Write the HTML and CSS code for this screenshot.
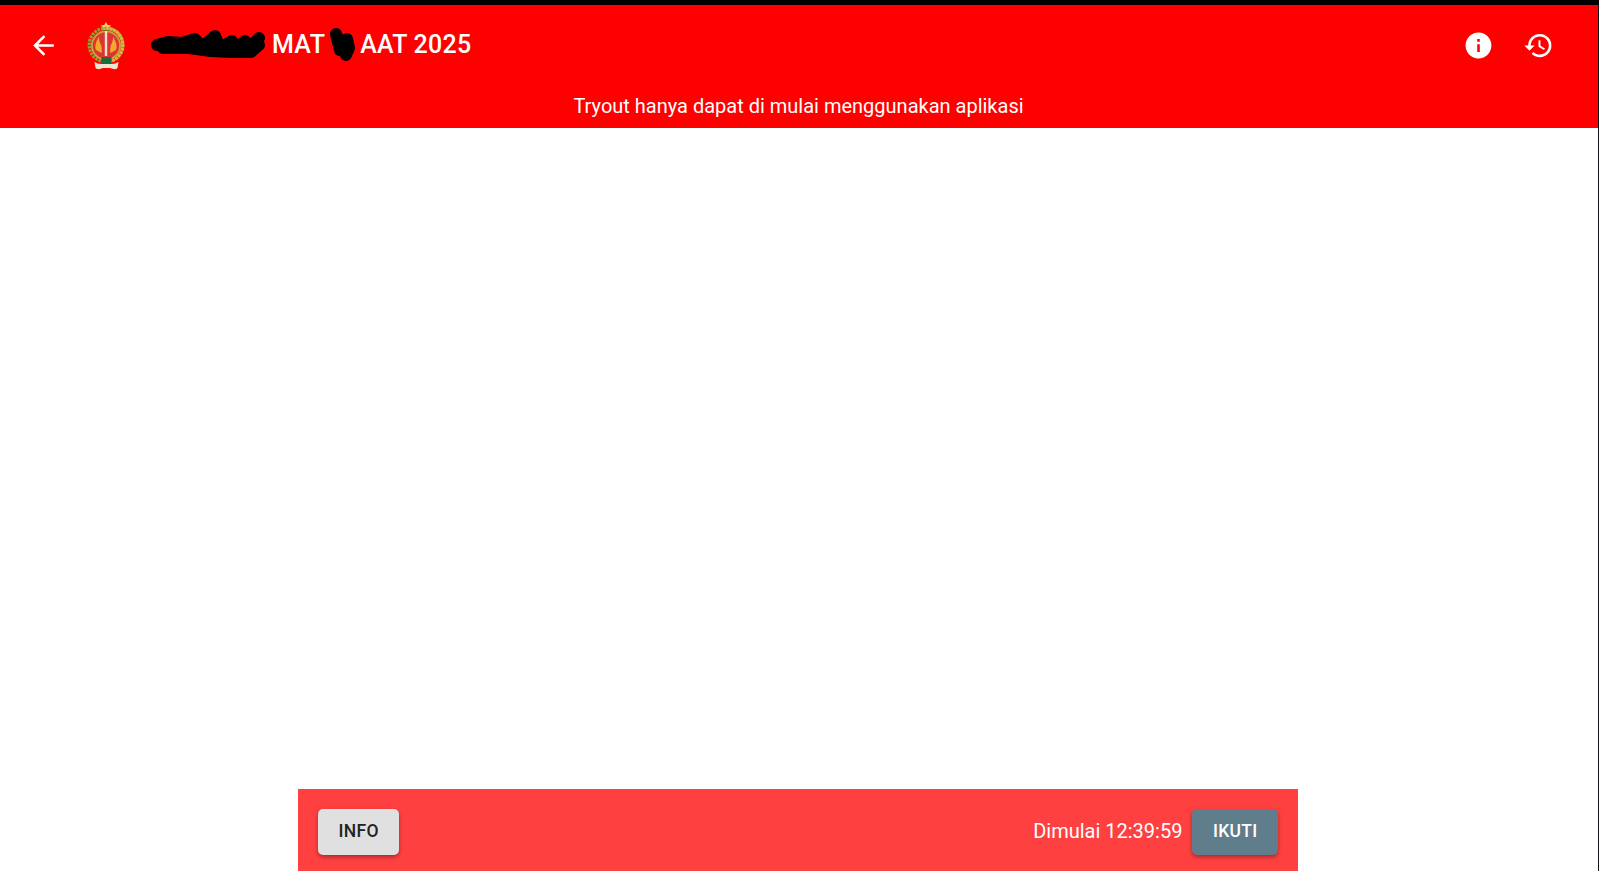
FILE: index.html
```html
<!DOCTYPE html>
<html lang="id">
<head>
  <meta charset="UTF-8">
  <title>Tryout MAT AAT 2025</title>
  <link rel="stylesheet" href="styles.css">
</head>
<body>
  <div class="page">
    <header class="appbar">
      <div class="toolbar">
        <button class="icon-btn back-btn" aria-label="Kembali">
          <svg viewBox="0 0 24 24" width="31" height="31"><path fill="#fff" d="M20 11H7.83l5.59-5.59L12 4l-8 8 8 8 1.41-1.41L7.83 13H20v-2z"/></svg>
        </button>
        <svg class="logo" viewBox="0 0 38 48" width="39" height="48">
          <path fill="#f2d468" d="M18.5 0l1.7 3 3.6.4-2.6 2.4.8 3.5-3.5-1.8-3.5 1.8.8-3.5-2.6-2.4 3.6-.4z"/>
          <rect x="15.5" y="8" width="6" height="3.5" fill="#3a3a2a"/>
          <circle cx="18.5" cy="23" r="16.8" fill="none" stroke="#8fa03a" stroke-width="3.2" stroke-dasharray="2.5 1"/>
          <path fill="none" stroke="#d6b63f" stroke-width="3.2" stroke-dasharray="3 .6" d="M18.5 6.200a16.8 16.8 0 0 1 0 33.6"/>
          <circle cx="18.5" cy="23.5" r="15" fill="#c9a53a"/>
          <circle cx="18.5" cy="23.5" r="13.2" fill="#dc3436"/>
          <path fill="#f2a92b" d="M8.500 28c-1.500-4 0-9 3-13 0 4 1 6 2 8 1 3 1 6 .5 8zM28.500 28c1.500-4 0-9-3-13 0 4-1 6-2 8-1 3-1 6-.5 8z"/>
          <rect x="17.3" y="9" width="2.4" height="25" fill="#eee3c2"/>
          <rect x="14" y="35" width="10" height="8" fill="#1c6b3c"/>
          <path fill="#ece6d2" d="M7 40c2 1 4 2 7 2h10c3 0 5-1 7-2l-1 6c-2 2-5 1-7 0h-8c-2 1-5 2-7 0z"/>
        </svg>
        <h1 class="title">
          <svg class="blob blob-a" viewBox="0 0 114 28" width="114" height="28"><polyline points="6,15 17,12 31,13 44,9 51,17 64,6 69,18 81,11 84,20 94,11 97,20 108,8"/><polyline points="12,18 38,18 60,21 80,22 100,22 108,15"/></svg>
          <span>MAT</span>
          <svg class="blob blob-b" viewBox="0 0 25 33" width="25" height="33"><polyline points="6,6 8,14 10,22"/><polyline points="17,11 19,20 16,27"/><polyline points="8,10 17,17"/></svg>
          <span>AAT 2025</span>
        </h1>
        <div class="actions">
          <button class="icon-btn" aria-label="Info">
            <svg viewBox="0 0 24 24" width="31" height="31"><path fill="#fff" d="M12 2C6.48 2 2 6.48 2 12s4.48 10 10 10 10-4.48 10-10S17.52 2 12 2zm1 15h-2v-6h2v6zm0-8h-2V7h2v2z"/></svg>
          </button>
          <button class="icon-btn" aria-label="Riwayat">
            <svg viewBox="0 0 24 24" width="31" height="31"><path fill="#fff" d="M13 3a9 9 0 0 0-9 9H1l3.89 3.89.07.14L9 12H6c0-3.87 3.13-7 7-7s7 3.13 7 7-3.13 7-7 7c-1.93 0-3.68-.79-4.94-2.06l-1.42 1.42A8.954 8.954 0 0 0 13 21a9 9 0 0 0 0-18zm-1 5v5l4.28 2.54.72-1.21-3.5-2.08V8H12z"/></svg>
          </button>
        </div>
      </div>
      <p class="subtitle">Tryout hanya dapat di mulai menggunakan aplikasi</p>
    </header>

    <main class="content"></main>

    <footer class="bottom-bar">
      <button class="btn btn-info">INFO</button>
      <div class="bottom-right">
        <span class="start-time">Dimulai 12:39:59</span>
        <button class="btn btn-join">IKUTI</button>
      </div>
    </footer>
  </div>
</body>
</html>
```

FILE: styles.css
```css
html, body { height: 100%; }
body { margin: 0; height: 871px; overflow: hidden; background: #12121c; font-family: Roboto, "Liberation Sans", sans-serif; border-top: 5px solid #000; box-sizing: border-box; }
button { font-family: inherit; border: none; cursor: pointer; }

.page { display: flex; flex-direction: column; height: 866px; margin-right: 1px; background: #fff; }

.appbar { background: #f00; color: #fff; height: 123px; flex: none; }
.toolbar { display: flex; align-items: center; height: 80px; padding: 0 40px 0 23px; }
.icon-btn { background: none; padding: 0; width: 40px; height: 40px; display: flex; align-items: center; justify-content: center; }
.logo { margin: 1px 0 0 24px; }
.title { display: flex; align-items: center; margin: 0 0 2px 25px; font-size: 25px; font-weight: 500; letter-spacing: 0.25px; }
.blob { flex: none; fill: none; stroke: #000; stroke-linecap: round; stroke-linejoin: round; }
.blob-a { margin-right: 7px; stroke-width: 12; }
.blob-b { margin: 0 5px 0 5px; stroke-width: 12; }
.actions { display: flex; gap: 20px; margin-left: auto; }
.subtitle { margin: 0; padding: 7px 1px 0 0; text-align: center; font-size: 20px; line-height: 28px; }

.content { flex: 1; }

.bottom-bar { width: 1000px; height: 82px; margin-left: 298px; flex: none; box-sizing: border-box; padding: 0 20px; background: #ff4040; display: flex; align-items: center; justify-content: space-between; }
.bottom-right { display: flex; align-items: center; gap: 10px; }
.start-time { color: #fff; font-size: 20px; margin-top: 2px; }
.btn { height: 46px; margin-top: 4px; padding: 0 20.5px 2px; border-radius: 5px; font-size: 17.5px; font-weight: 500; letter-spacing: 0.3px; box-shadow: 0 2px 4px rgba(0, 0, 0, 0.35); }
.btn-info { background: #e0e0e0; color: #222; }
.btn-join { background: #607d8b; color: #fff; }
```
